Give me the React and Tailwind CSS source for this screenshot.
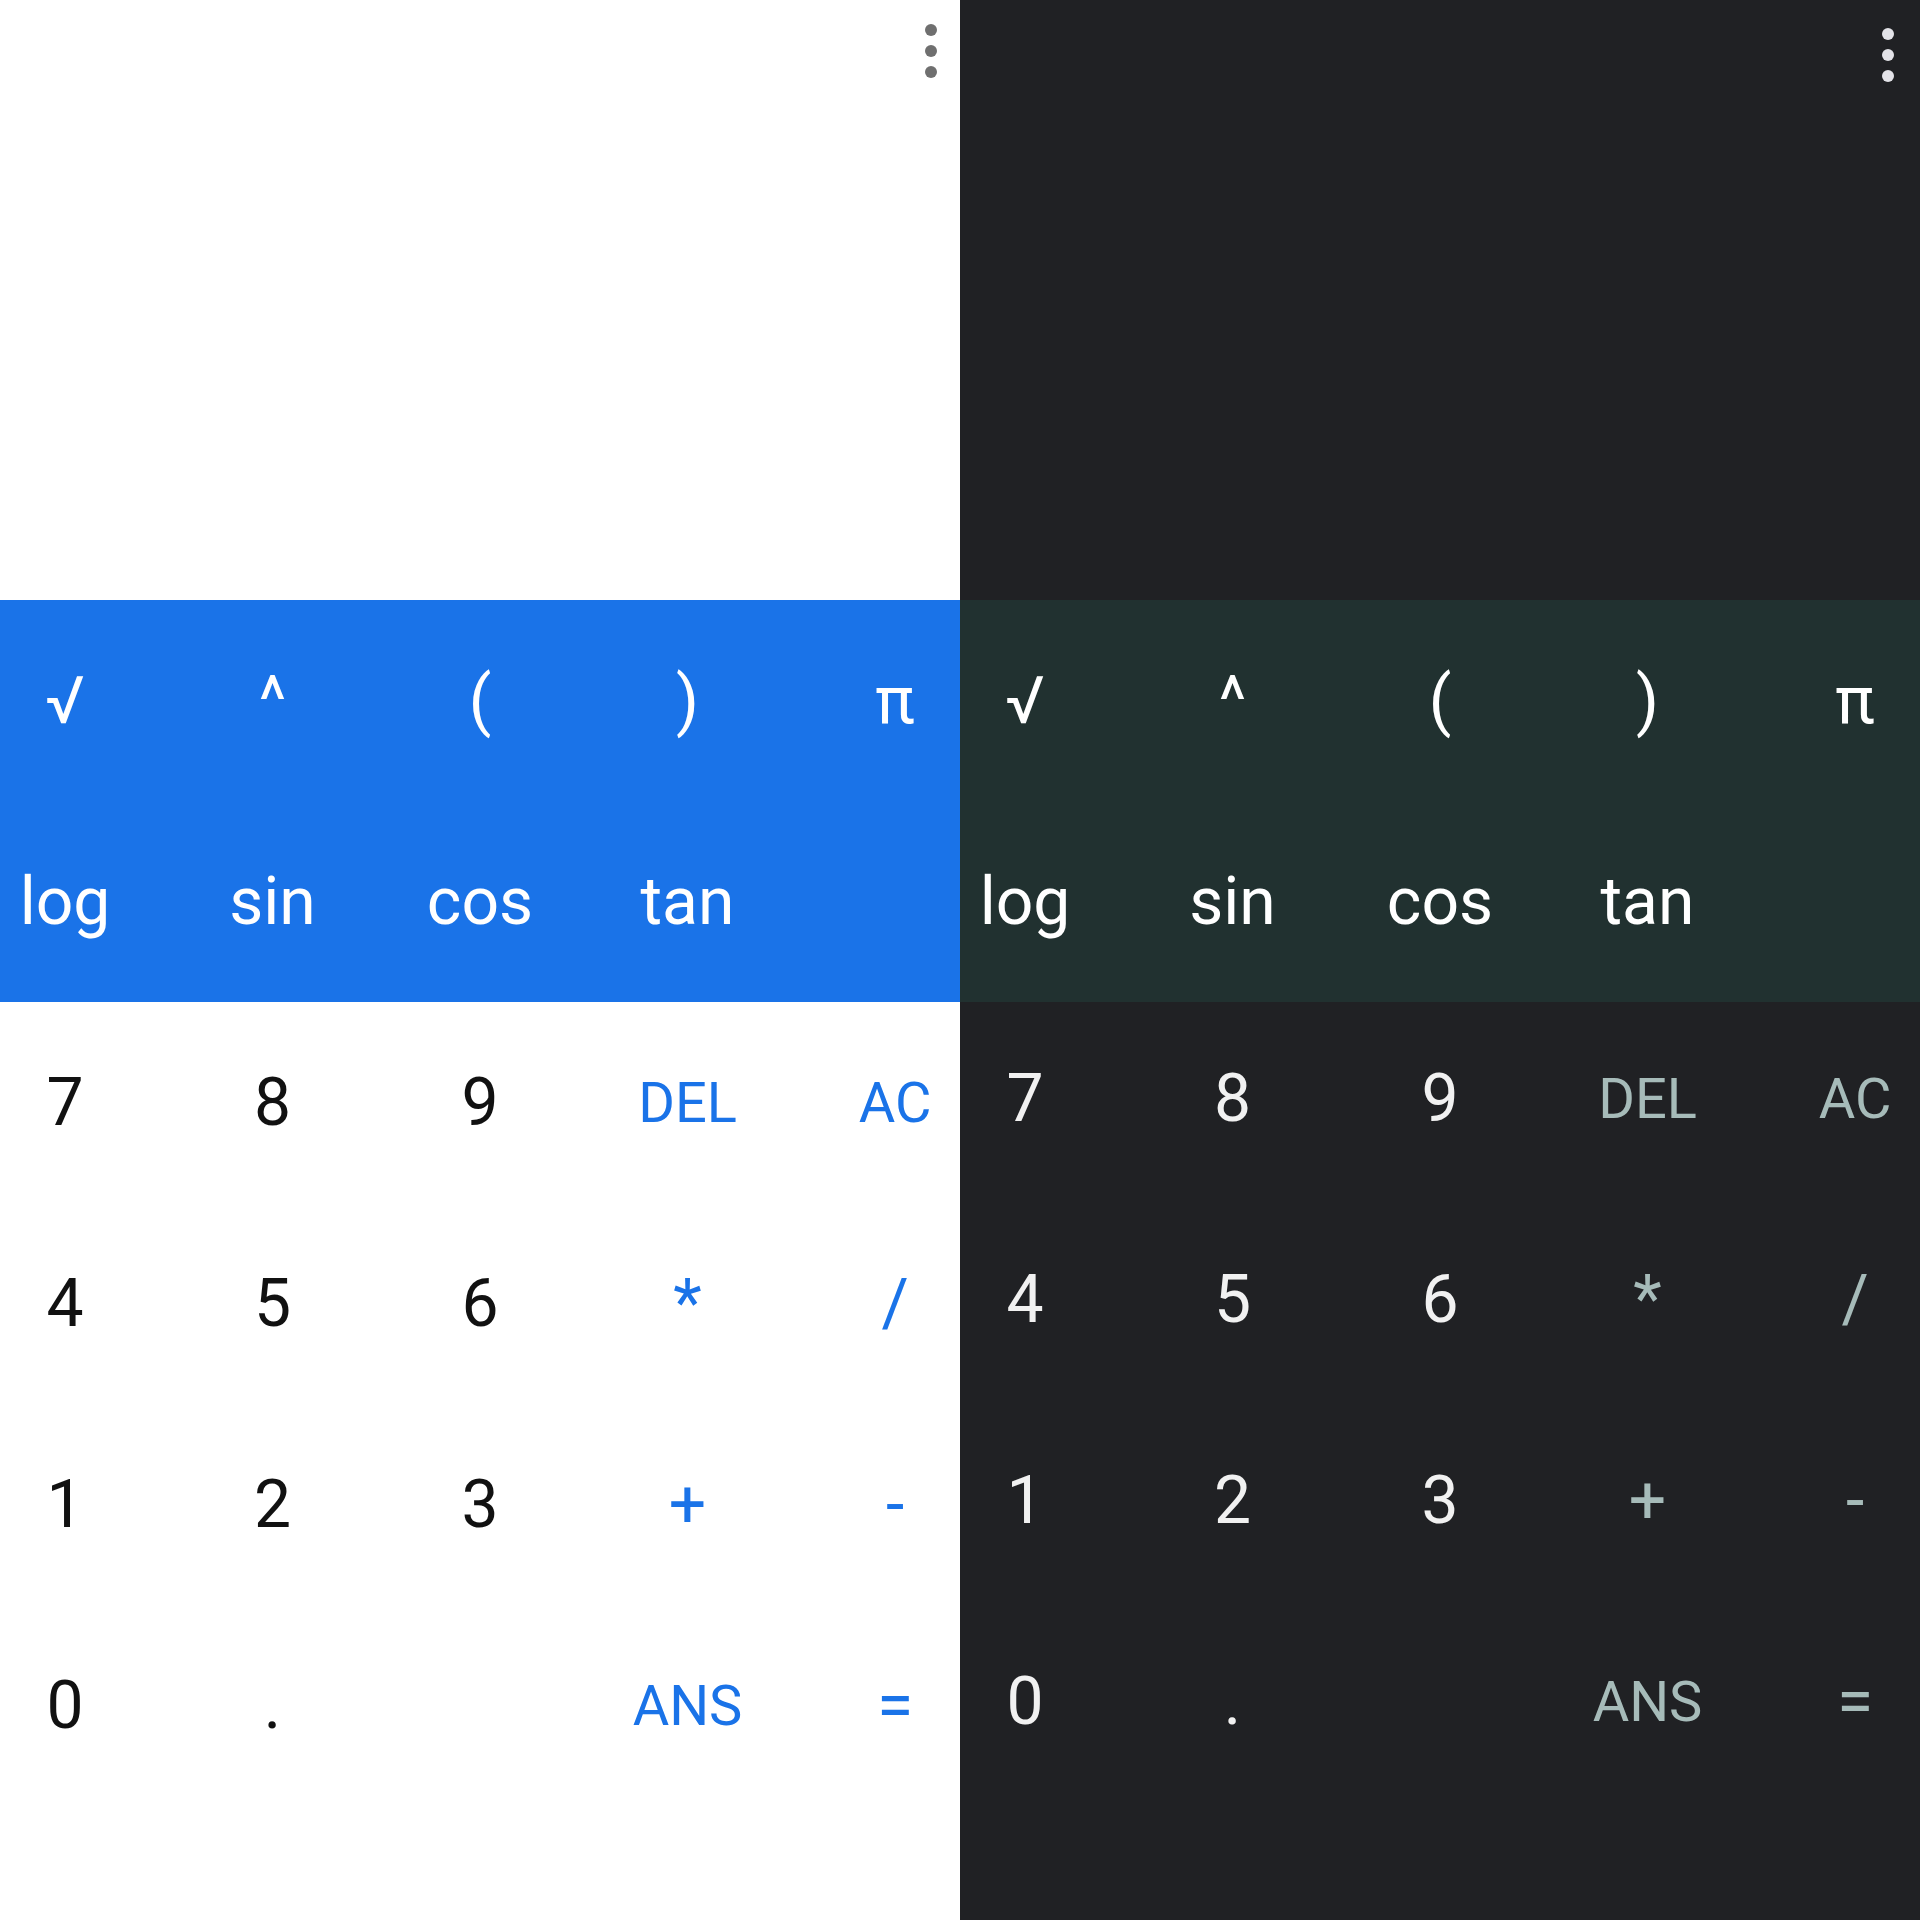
import React from "react";

const sciRows = [
  ["√", "^", "(", ")", "π"],
  ["log", "sin", "cos", "tan", ""],
];

// [label, kind] kind: 0 digit, 1 word op, 2 symbol op
const keyRows = [
  [["7", 0], ["8", 0], ["9", 0], ["DEL", 1], ["AC", 1]],
  [["4", 0], ["5", 0], ["6", 0], ["*", 2], ["/", 2]],
  [["1", 0], ["2", 0], ["3", 0], ["+", 2], ["-", 2]],
  [["0", 0], [".", 0], ["", 0], ["ANS", 1], ["=", 2]],
];

function Dots({ dark }) {
  const dot = dark ? "bg-[#e3e3e8]" : "bg-[#6f6f6f]";
  return (
    <div
      className={
        dark
          ? "flex flex-col gap-[9px] pt-[28px] pr-[26px] items-end"
          : "flex flex-col gap-[9px] pt-[24px] pr-[23px] items-end"
      }
    >
      <span className={`w-[12px] h-[12px] rounded-full ${dot}`} />
      <span className={`w-[12px] h-[12px] rounded-full ${dot}`} />
      <span className={`w-[12px] h-[12px] rounded-full ${dot}`} />
    </div>
  );
}

function Panel({ dark }) {
  const bg = dark ? "bg-[#202124]" : "bg-white";
  const band = dark ? "bg-[#213130]" : "bg-[#1a73e8]";
  const digit = dark ? "text-[#f1f1f1]" : "text-[#111111]";
  const op = dark ? "text-[#a6bbb9]" : "text-[#1a73e8]";

  const keyClass = (kind) => {
    if (kind === 1) return `text-[56px] ${op}`;
    if (kind === 2) return `text-[66px] ${op}`;
    return `text-[66px] ${digit}`;
  };

  return (
    <div className={`w-[960px] h-[1920px] overflow-hidden flex flex-col ${bg}`}>
      <div className="h-[600px] flex justify-end">
        <Dots dark={dark} />
      </div>

      <div className={`h-[402px] flex flex-col ${band}`}>
        {sciRows.map((row, i) => (
          <div key={i} className="h-[201px] flex justify-center">
            {row.map((k, j) => (
              <div
                key={j}
                className="w-[207.5px] shrink-0 flex items-center justify-center text-white text-[66px] leading-none"
              >
                {k}
              </div>
            ))}
          </div>
        ))}
      </div>

      <div className={dark ? "flex flex-col -mt-[4px]" : "flex flex-col"}>
        {keyRows.map((row, i) => (
          <div key={i} className="h-[201px] flex justify-center">
            {row.map(([k, kind], j) => (
              <div
                key={j}
                className={`w-[207.5px] shrink-0 flex items-center justify-center leading-none ${keyClass(kind)}`}
              >
                {k}
              </div>
            ))}
          </div>
        ))}
      </div>
    </div>
  );
}

export default function App() {
  return (
    <div className="flex w-[1920px] h-[1920px] font-['Roboto','Liberation_Sans',sans-serif]">
      <Panel />
      <Panel dark />
    </div>
  );
}
